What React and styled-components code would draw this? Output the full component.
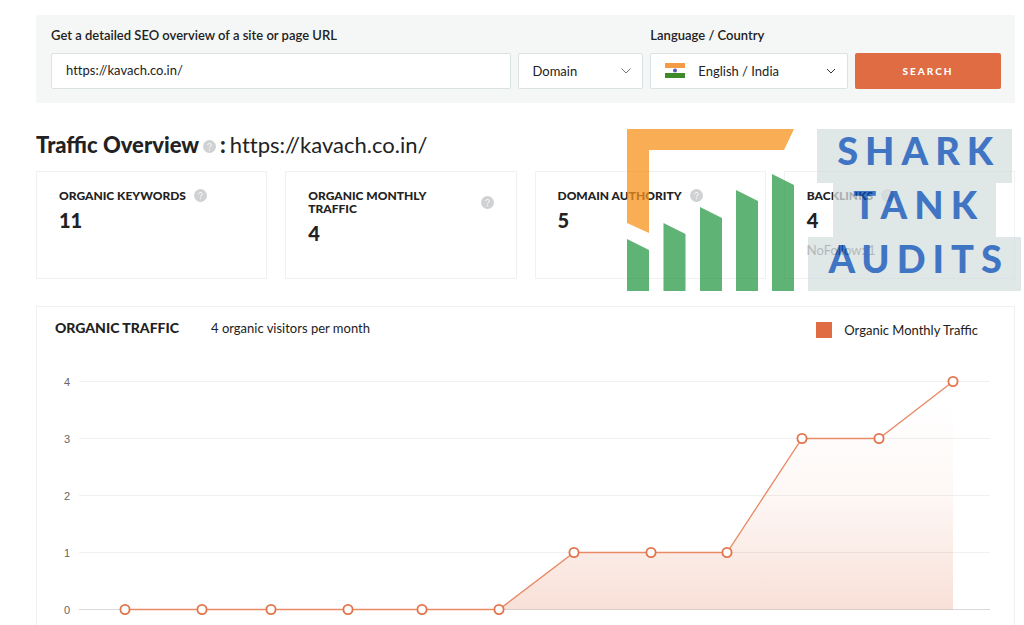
import React, { useState } from 'react';
import styled, { createGlobalStyle } from 'styled-components';

const GlobalStyle = createGlobalStyle`
  * {
    box-sizing: border-box;
  }

  body {
    margin: 0;
    background: #ffffff;
    color: #222222;
    font-family: Lato, 'Liberation Sans', sans-serif;
    font-size: 13px;
  }

  button, input, select {
    font-family: inherit;
  }
`;

const Page = styled.main`
  padding: 15px 9px 0 36px;
`;

const SearchBar = styled.form`
  display: grid;
  grid-template-columns: 460fr 126fr 198fr 146fr;
  column-gap: 7px;
  padding: 10px 14px 14px 15px;
  border-radius: 2px;
  background: #f5f7f6;
`;

const Label = styled.label`
  grid-column: ${(props) => (props.$wide ? 'span 2' : 'span 1')};
  height: 28px;
  line-height: 20px;
  font-size: 13px;
  font-weight: 600;
`;

const UrlInput = styled.input`
  grid-column: 1;
  width: 100%;
  height: 36px;
  padding: 0 14px 2px;
  border: 1px solid #dbe2e4;
  border-radius: 2px;
  background: #ffffff;
  color: #222222;
  font-size: 13px;
  font-variant-ligatures: none;
`;

const SelectBox = styled.div`
  position: relative;
`;

const Select = styled.select`
  width: 100%;
  height: 36px;
  padding: 0 30px 0 ${(props) => (props.$flag ? '47px' : '14px')};
  border: 1px solid #dbe2e4;
  border-radius: 2px;
  background: #ffffff;
  color: #222222;
  font-size: 13px;
  appearance: none;
`;

const Chevron = styled.svg`
  position: absolute;
  top: 14px;
  right: 12px;
  width: 10px;
  height: 8px;
  fill: none;
  stroke: ${(props) => props.$tone};
  pointer-events: none;
`;

const Flag = styled.svg`
  position: absolute;
  top: 10px;
  left: 15px;
  width: 20px;
  height: 15px;
  pointer-events: none;
`;

const SearchButton = styled.button`
  height: 36px;
  border: 0;
  border-radius: 2px;
  background: #e06c43;
  color: #ffffff;
  font-size: 10px;
  font-weight: 900;
  letter-spacing: 2px;
`;

const Overview = styled.section`
  position: relative;
  padding-top: 26px;
`;

const Title = styled.h1`
  display: flex;
  align-items: center;
  height: 30px;
  margin: 0 0 12px;
  font-size: 22px;
  font-weight: 900;
`;

const TitleUrl = styled.span`
  margin-left: 4px;
  font-weight: 400;
  font-variant-ligatures: none;
`;

const Help = styled.svg`
  flex: none;
  width: 13px;
  height: 13px;
  margin: ${(props) => (props.$title ? '4px 4px 0 4px' : '0')};
`;

const Cards = styled.div`
  display: grid;
  grid-template-columns: repeat(4, 1fr);
  gap: 18px;
`;

const Card = styled.article`
  min-height: 108px;
  padding: 17px 22px;
  border: 1px solid #f0f1f1;
`;

const CardHead = styled.div`
  display: flex;
  align-items: center;
  justify-content: ${(props) => (props.$spread ? 'space-between' : 'flex-start')};
  gap: 8px;
`;

const CardTitle = styled.h2`
  max-width: 140px;
  margin: 0;
  font-size: 12px;
  line-height: 13px;
  font-weight: 900;
`;

const CardValue = styled.p`
  margin: 6px 0 0;
  font-size: 20px;
  line-height: 24px;
  font-weight: 900;
`;

const CardNote = styled.p`
  margin: 10px 0 0;
  color: #444444;
  font-size: 13px;
  line-height: 16px;
`;

const Watermark = styled.div`
  position: absolute;
  top: 26px;
  right: -6px;
  display: flex;
  gap: 14px;
  opacity: 0.75;
  pointer-events: none;
`;

const WatermarkText = styled.div`
  display: flex;
  flex-direction: column;
  align-items: center;
`;

const WatermarkLine = styled.span`
  padding: 0 12px 12px 20px;
  background: #d6dfe0;
  color: #0048b0;
  font-size: 38px;
  line-height: 42px;
  font-weight: 900;
  letter-spacing: 7px;
`;

const Panel = styled.section`
  margin-top: 27px;
  border: 1px solid #eef1f1;
  border-bottom: 0;
`;

const PanelHead = styled.header`
  display: flex;
  align-items: flex-start;
  height: 58px;
  padding: 11px 36px 0 18px;
`;

const PanelTitle = styled.h2`
  margin: 0;
  font-size: 14px;
  line-height: 20px;
  font-weight: 900;
`;

const PanelNote = styled.span`
  margin-left: 32px;
  font-size: 13px;
  line-height: 20px;
`;

const Legend = styled.span`
  display: flex;
  align-items: center;
  gap: 12px;
  margin-left: auto;
  font-size: 13px;
  line-height: 24px;
`;

const Swatch = styled.i`
  width: 16px;
  height: 16px;
  background: #e06c43;
`;

const Chart = styled.svg`
  display: block;
  width: 100%;
  height: auto;
`;

const AxisText = styled.text`
  fill: #666666;
  font-family: 'Liberation Sans', sans-serif;
  font-size: 11px;
  text-anchor: end;
`;

const stats = [
  { title: 'ORGANIC KEYWORDS', value: '11' },
  { title: 'ORGANIC MONTHLY TRAFFIC', value: '4', spread: true },
  { title: 'DOMAIN AUTHORITY', value: '5' },
  { title: 'BACKLINKS', value: '4', note: 'NoFollow: 1' },
];

// [x, visitors]
const points = [
  [88, 0], [165, 0], [234, 0], [311, 0], [385, 0], [462, 0],
  [537, 1], [614, 1], [690, 1], [765, 3], [842, 3], [916, 4],
];

const yOf = (value) => 244.5 - value * 57;

function HelpIcon({ title }) {
  return (
    <Help viewBox="0 0 13 13" $title={title} aria-hidden="true">
      <circle cx="6.5" cy="6.5" r="6.5" fill="#cfd1d2" />
      <path d="M4.8 5.2a1.7 1.7 0 1 1 2.6 1.4c-.6.4-.9.6-.9 1.3" fill="none" stroke="#fff" />
      <circle cx="6.5" cy="9.6" r=".7" fill="#fff" />
    </Help>
  );
}

function TrafficChart() {
  const line = points.map(([x, v]) => `${x},${yOf(v)}`).join(' ');

  return (
    <Chart viewBox="0 0 977 260" role="img" aria-label="Organic Monthly Traffic">
      <defs>
        <linearGradient id="area" gradientUnits="userSpaceOnUse" x1="0" y1="35" x2="0" y2="245">
          <stop offset="0" stopColor="#e06c43" stopOpacity="0" />
          <stop offset="0.45" stopColor="#e06c43" stopOpacity="0.05" />
          <stop offset="1" stopColor="#e06c43" stopOpacity="0.21" />
        </linearGradient>
      </defs>
      <polygon points={`${line} 916,244.5`} fill="url(#area)" />
      {[4, 3, 2, 1, 0].map((value) => (
        <g key={value}>
          <AxisText x="33" y={yOf(value) + 4}>{value}</AxisText>
          <line
            x1="42"
            x2="953"
            y1={yOf(value)}
            y2={yOf(value)}
            stroke="#000"
            strokeOpacity={value === 0 ? 0.15 : 0.06}
          />
        </g>
      ))}
      <polyline points={line} fill="none" stroke="#e98a67" strokeWidth="1.3" />
      {points.map(([x, v]) => (
        <circle key={x} cx={x} cy={yOf(v)} r="4.6" fill="#fff" stroke="#e3734b" strokeWidth="1.8" />
      ))}
    </Chart>
  );
}

function App() {
  const [url, setUrl] = useState('https://kavach.co.in/');

  return (
    <>
      <GlobalStyle />
      <Page>
        <SearchBar onSubmit={(e) => e.preventDefault()}>
          <Label htmlFor="url" $wide>Get a detailed SEO overview of a site or page URL</Label>
          <Label htmlFor="country" $wide>Language / Country</Label>
          <UrlInput id="url" type="text" value={url} onChange={(e) => setUrl(e.target.value)} />
          <SelectBox>
            <Select aria-label="Scope">
              <option>Domain</option>
            </Select>
            <Chevron viewBox="0 0 10 8" $tone="#777777">
              <path d="M.5 1.5 5 6l4.500-4.500" />
            </Chevron>
          </SelectBox>
          <SelectBox>
            <Select id="country" $flag>
              <option>English / India</option>
            </Select>
            <Flag viewBox="0 0 20 15">
              <rect width="20" height="15" fill="#fff" />
              <rect width="20" height="5" fill="#f59a45" />
              <rect y="10" width="20" height="5" fill="#3f8a28" />
              <circle cx="10" cy="7.500" r="2" fill="#5b57b8" />
            </Flag>
            <Chevron viewBox="0 0 10 8" $tone="#333333">
              <path d="M1 2l4 4 4-4" />
            </Chevron>
          </SelectBox>
          <SearchButton type="submit">SEARCH</SearchButton>
        </SearchBar>

        <Overview>
          <Title>
            Traffic Overview
            <HelpIcon title />
            :
            <TitleUrl>https://kavach.co.in/</TitleUrl>
          </Title>
          <Cards>
            {stats.map((stat) => (
              <Card key={stat.title}>
                <CardHead $spread={stat.spread}>
                  <CardTitle>{stat.title}</CardTitle>
                  <HelpIcon />
                </CardHead>
                <CardValue>{stat.value}</CardValue>
                {stat.note && <CardNote>{stat.note}</CardNote>}
              </Card>
            ))}
          </Cards>
          <Watermark>
            <svg width="167" height="162" viewBox="0 0 167 162" aria-hidden="true">
              <path d="M0 0h167l-10 21H22v83L0 94z" fill="#f7921c" />
              <g fill="#2a9b47">
                <path d="M0 110l22 11v41H0z" />
                <path d="M36.500 94l22 11v57h-22z" />
                <path d="M73 78l22 11v73H73z" />
                <path d="M109 61l22 11v90h-22z" />
                <path d="M145 45l22 11v106h-22z" />
              </g>
            </svg>
            <WatermarkText>
              <WatermarkLine>SHARK</WatermarkLine>
              <WatermarkLine>TANK</WatermarkLine>
              <WatermarkLine>AUDITS</WatermarkLine>
            </WatermarkText>
          </Watermark>
        </Overview>

        <Panel>
          <PanelHead>
            <PanelTitle>ORGANIC TRAFFIC</PanelTitle>
            <PanelNote>4 organic visitors per month</PanelNote>
            <Legend>
              <Swatch />
              Organic Monthly Traffic
            </Legend>
          </PanelHead>
          <TrafficChart />
        </Panel>
      </Page>
    </>
  );
}

export default App;
